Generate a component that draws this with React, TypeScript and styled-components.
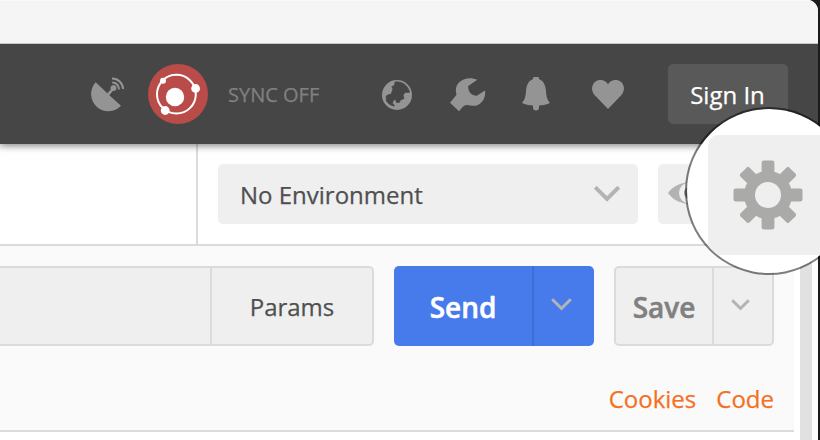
import React from "react";
import styled, { createGlobalStyle, css } from "styled-components";

const GlobalStyle = createGlobalStyle`
  * { box-sizing: border-box; }
  body { margin: 0; background: #1a1a1a; font-family: "Open Sans", sans-serif; overflow: hidden; }
  svg { display: block; flex: none; }
`;

const Screen = styled.div`
  position: relative;
  width: 820px;
  height: 440px;
  overflow: hidden;
  background: #1b1b1b;
  -webkit-text-stroke: 0.25px currentColor;
`;

const AppWindow = styled.div`
  display: flex;
  flex-direction: column;
  width: 818px;
  height: 440px;
  overflow: hidden;
  border-top-right-radius: 11px;
  background: #fff;
`;

const TitleBar = styled.div`
  flex: none;
  position: relative;
  z-index: 2;
  height: 44px;
  background: #f5f5f5;
  border-top: 1px solid #fafafa;
  border-bottom: 1px solid #c6c8c8;
`;

const Header = styled.header`
  flex: none;
  position: relative;
  z-index: 1;
  display: flex;
  align-items: center;
  height: 100px;
  padding: 0 30px 0 90px;
  background: #464646;
  box-shadow: 0 1px 8px 0 rgba(0, 0, 0, 0.5), -8px 1px 8px 0 rgba(0, 0, 0, 0.1);
`;

const SyncGroup = styled.div`
  display: flex;
  align-items: center;
  gap: 20px;
  margin-left: 22px;
`;

const SyncLabel = styled.span`
  width: 92px;
  padding-top: 2px;
  color: #808080;
  font-size: 20px;
  line-height: 28px;
  white-space: nowrap;
`;

const HeaderIcons = styled.div`
  display: grid;
  grid-template-columns: 68px 72px 66px 36px;
  align-items: center;
  margin-left: 62px;
  padding-top: 2px;
`;

const SignInButton = styled.button`
  width: 120px;
  height: 60px;
  margin-left: auto;
  padding: 1px 1px 0 0;
  border: 0;
  border-radius: 5px;
  background: #595959;
  color: #fff;
  font: 400 24px/32px "Open Sans", sans-serif;
`;

const EnvironmentRow = styled.div`
  flex: none;
  display: flex;
  height: 102px;
  border-bottom: 2px solid #dbdbdb;
`;

const TabStrip = styled.div`
  width: 198px;
  border-right: 2px solid #dbdbdb;
`;

const EnvironmentTools = styled.div`
  display: flex;
  flex: 1;
  gap: 20px;
  padding: 20px 0 0 20px;
`;

const softBox = css`
  display: flex;
  align-items: center;
  height: 60px;
  border-radius: 5px;
  background: #efefef;
`;

const Select = styled.div`
  ${softBox}
  justify-content: space-between;
  width: 420px;
  padding: 0 18px 0 22px;
  color: #505050;
  font-size: 24px;
  white-space: nowrap;
`;

const PreviewButton = styled.div`
  ${softBox}
  width: 60px;
  padding: 0 0 2px 10px;
`;

const Body = styled.div`
  flex: 1;
  display: flex;
`;

const RequestPanel = styled.main`
  width: 794px;
  height: 186px;
  border-bottom: 2px solid #dbdbdb;
  background: #fafafa;
`;

const RequestRow = styled.div`
  display: flex;
  gap: 20px;
  padding-top: 20px;
`;

const UrlGroup = styled.div`
  display: flex;
  width: 374px;
  height: 80px;
  border: 2px solid #dbdbdb;
  border-left: 0;
  border-radius: 0 5px 5px 0;
  background: #efefef;
`;

const UrlField = styled.div`
  width: 212px;
  border-right: 2px solid #dbdbdb;
`;

const ParamsButton = styled.div`
  display: flex;
  flex: 1;
  align-items: center;
  justify-content: center;
  color: #505050;
  font-size: 24px;
`;

const SplitButton = styled.div<{ $primary?: boolean }>`
  display: flex;
  height: 80px;
  width: ${(p) => (p.$primary ? 200 : 160)}px;
  border: ${(p) => (p.$primary ? "0" : "2px solid #dbdbdb")};
  border-radius: 5px;
  background: ${(p) => (p.$primary ? "#477bec" : "#efefef")};
  color: ${(p) => (p.$primary ? "#fff" : "#808080")};
`;

const SplitLabel = styled.div<{ $primary?: boolean }>`
  display: flex;
  align-items: center;
  justify-content: center;
  width: ${(p) => (p.$primary ? 140 : 98)}px;
  padding-top: 1px;
  border-right: 2px solid ${(p) => (p.$primary ? "#3f6fd3" : "#dbdbdb")};
  font-size: 28px;
  font-weight: 600;
  -webkit-text-stroke-width: 0.5px;
`;

const SplitArrow = styled.div`
  display: flex;
  flex: 1;
  align-items: center;
  justify-content: center;
  padding: 0 5px 2px 0;
`;

const Links = styled.nav`
  display: flex;
  justify-content: flex-end;
  gap: 20px;
  padding: 36px 20px 0 0;
`;

const TextLink = styled.a`
  color: #f47023;
  font-size: 24px;
  line-height: 34px;
`;

const Scrollbar = styled.div`
  width: 12px;
  margin-left: 6px;
  background: #e1e1e1;
`;

const Lens = styled.div`
  position: absolute;
  z-index: 2;
  top: 107px;
  left: 685px;
  width: 168px;
  height: 168px;
  overflow: hidden;
  border: 2.5px solid rgba(0, 0, 0, 0.5);
  border-radius: 50%;
  background: #fff;
  background-clip: padding-box;
`;

const LensButton = styled.div`
  width: 160px;
  height: 120px;
  margin: 26px 0 0 21px;
  padding: 24px 0 0 24px;
  border-radius: 10px;
  background: #efefef;
`;

const SatelliteIcon = () => (
  <svg width="36" height="36" viewBox="90 76 36 36">
    <path d="M95.7 82.3 L107.3 93.2 L110.8 89.4 A3 3 0 1 1 112.8 91 L109.3 95.2 L121 105.7 A16.8 16.8 0 0 1 95.7 82.3Z" fill="#949494" />
    <path d="M112.2 82.5 A6.7 6.7 0 0 1 119 89.5 M112 78.4 A11 11 0 0 1 123.1 89" fill="none" stroke="#949494" strokeWidth="2" />
  </svg>
);

const OrbitIcon = () => (
  <svg width="60" height="60" viewBox="148 64 60 60">
    <circle cx="178" cy="94" r="30" fill="#b94b49" />
    <circle cx="176.4" cy="94.2" r="19.4" fill="none" stroke="#fff" strokeWidth="2" />
    <g fill="#fff">
      <circle cx="175" cy="97" r="9.2" />
      <circle cx="163" cy="80.7" r="3" />
      <circle cx="195.6" cy="88.5" r="4.4" />
      <circle cx="165.2" cy="110.5" r="4.4" />
    </g>
  </svg>
);

const GlobeIcon = () => (
  <svg width="30" height="30" viewBox="382 80 30 30">
    <circle cx="397" cy="95" r="15" fill="#949494" />
    <path d="M395 82 C401 81 408 85 409.5 92.2 L405 92.5 L403 95 L404 98.5 L400.3 100 L399.5 102.3 L396.5 102.5 L395.8 99.7 L393.3 100 L392.5 103.2 L394.5 106 C391.5 106 388 103.5 386.4 101 L386.2 96 L389 94.5 L391 94.5 L393 89 L391.8 86.5 L394.5 85.5Z" fill="#464646" stroke="#464646" strokeWidth="0.8" strokeLinejoin="round" />
  </svg>
);

const WrenchIcon = () => (
  <svg width="36" height="36" viewBox="450 77 36 36">
    <path d="M477.3 79.7 C471 77 463 77.7 458.5 83 C455.5 86.7 455.5 90.5 456.5 94.7 L450 102.7 L459 111.3 C462 107.5 464 105.3 466.5 105 C470 105 472.5 106.3 476 105.7 C482.5 104 486 97 485 90.5 L476.8 95.8 C471.5 95.8 467.8 91.5 468.2 86Z" fill="#949494" />
  </svg>
);

const BellIcon = () => (
  <svg width="28" height="36" viewBox="522 77 28 36">
    <path d="M533 79 A3 3 0 0 1 539 79 C544 81 545.6 86 546 91 C546.4 97 547.5 100 550 103 C547 104.7 543 105.3 539 105.5 V107.5 A3 3 0 0 1 533 107.5 V105.5 C529 105.3 525 104.7 522 103 C524.5 100 525.6 97 526 91 C526.4 86 528 81 533 79Z" fill="#949494" />
  </svg>
);

const HeartIcon = () => (
  <svg width="36" height="30" viewBox="588 80 36 30">
    <path d="M608 84.3 C604.5 79 598.5 78.8 594.8 82 C591 86 591.4 91 594.5 95 L608 109 L621.5 95 C624.6 91 625 86 621.2 82 C617.5 78.8 611.5 79 608 84.3Z" fill="#949494" />
  </svg>
);

const EyeIcon = () => (
  <svg width="48" height="24" viewBox="668 181 48 24">
    <path d="M668 193 C678 178.5 702 178.5 712 193 C702 207.5 678 207.5 668 193Z" fill="#b3b3b3" />
    <circle cx="689.5" cy="193" r="10.5" fill="#efefef" />
    <circle cx="690.5" cy="193" r="6.5" fill="#949494" />
  </svg>
);

const GearIcon = () => (
  <svg width="72" height="72" viewBox="-36 -36 72 72">
    <g fill="#aaaaa8">
      {[0, 45, 90, 135].map((angle) => (
        <rect key={angle} x="-6.4" y="-34.5" width="12.8" height="69" rx="2.2" transform={`rotate(${angle})`} />
      ))}
      <circle r="24" />
    </g>
    <circle r="13" fill="#efefef" />
  </svg>
);

const Chevron = ({ size, stroke, color }: { size: number; stroke: number; color: string }) => (
  <svg width={size} height={size * 0.62} viewBox={`0 0 ${size} ${size * 0.62}`}>
    <path
      d={`M1.2 1.2 L${size / 2} ${size * 0.5} L${size - 1.2} 1.2`}
      fill="none"
      stroke={color}
      strokeWidth={stroke}
    />
  </svg>
);

export default function App() {
  return (
    <Screen>
      <GlobalStyle />
      <AppWindow>
        <TitleBar />
        <Header>
          <SatelliteIcon />
          <SyncGroup>
            <OrbitIcon />
            <SyncLabel>SYNC OFF</SyncLabel>
          </SyncGroup>
          <HeaderIcons>
            <GlobeIcon />
            <WrenchIcon />
            <BellIcon />
            <HeartIcon />
          </HeaderIcons>
          <SignInButton>Sign In</SignInButton>
        </Header>
        <EnvironmentRow>
          <TabStrip />
          <EnvironmentTools>
            <Select>
              No Environment
              <Chevron size={26} stroke={4} color="#b3b3b3" />
            </Select>
            <PreviewButton>
              <EyeIcon />
            </PreviewButton>
          </EnvironmentTools>
        </EnvironmentRow>
        <Body>
          <RequestPanel>
            <RequestRow>
              <UrlGroup>
                <UrlField />
                <ParamsButton>Params</ParamsButton>
              </UrlGroup>
              <SplitButton $primary>
                <SplitLabel $primary>Send</SplitLabel>
                <SplitArrow>
                  <Chevron size={21} stroke={3} color="#b3b3b3" />
                </SplitArrow>
              </SplitButton>
              <SplitButton>
                <SplitLabel>Save</SplitLabel>
                <SplitArrow>
                  <Chevron size={19} stroke={3} color="#b3b3b3" />
                </SplitArrow>
              </SplitButton>
            </RequestRow>
            <Links>
              <TextLink>Cookies</TextLink>
              <TextLink>Code</TextLink>
            </Links>
          </RequestPanel>
          <Scrollbar />
        </Body>
      </AppWindow>
      <Lens>
        <LensButton>
          <GearIcon />
        </LensButton>
      </Lens>
    </Screen>
  );
}
